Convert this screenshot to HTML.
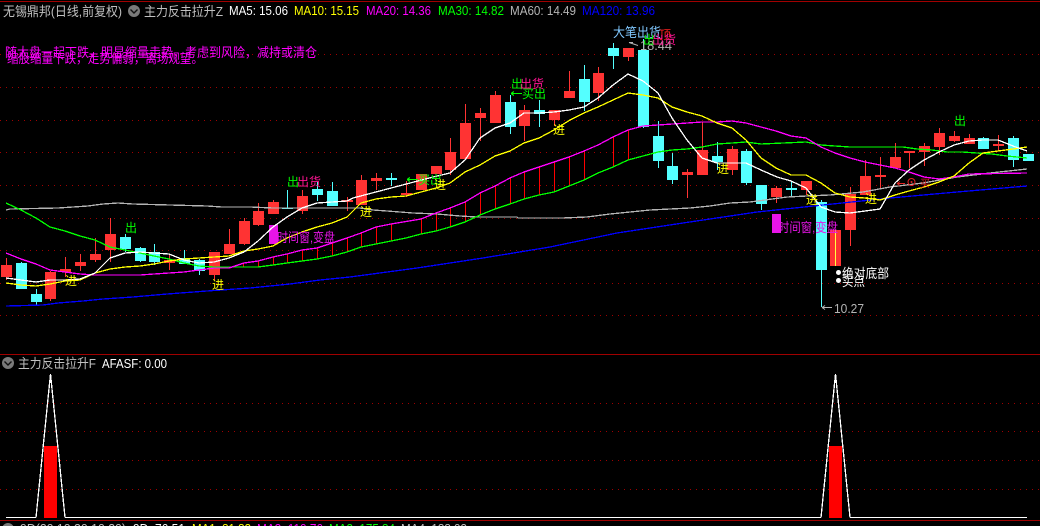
<!DOCTYPE html>
<html><head><meta charset="utf-8"><style>
html,body{margin:0;padding:0;background:#000;width:1040px;height:526px;overflow:hidden}
svg{display:block}
text{font-family:"WenQuanYi Zen Hei","Liberation Sans","Noto Sans CJK SC",sans-serif;font-size:13px}
</style></head><body>
<svg width="1040" height="526" viewBox="0 0 1040 526" xmlns="http://www.w3.org/2000/svg">
<rect width="1040" height="526" fill="#000"/>
<g shape-rendering="crispEdges">
<path d="M0 1.5H1040M0 354.5H1040M0 520.5H1040" stroke="#a00000" stroke-width="1" fill="none"/>
<path d="M0 54.5H1040M0 87.5H1040M0 120.5H1040M0 152.5H1040M0 185.5H1040M0 218.5H1040M0 250.5H1040M0 283.5H1040M0 315.5H1040M0 403.5H1040M0 431.5H1040M0 460.5H1040M0 489.5H1040" stroke="#a00000" stroke-width="1" stroke-dasharray="1 5" fill="none"/>
<path d="M243.5 263V267M258.5 261V267M273.5 257V265M287.5 254V263M302.5 250V261M317.5 248V259M332.5 243V256M347.5 238V252M361.5 233V247M376.5 227V244M391.5 224V241M421.5 219V234M436.5 213V231M450.5 208V227M465.5 202V222M480.5 193V215M495.5 186V209M510.5 178V204M524.5 172V199M539.5 167V195M554.5 162V192M569.5 157V186M584.5 151V180M613.5 137V167M628.5 130V160" stroke="#ff0000" stroke-width="1" fill="none"/>
<path fill="#ff3333" d="M1 265h11v12H1zM6 258h1v22H6zM45 272h11v27H45zM50 271h1v30h-1zM60 269h11v3H60zM65 257h1v20h-1zM75 262h11v4H75zM80 254h1v17h-1zM90 254h11v6H90zM95 238h1v24h-1zM105 234h11v16h-11zM110 218h1v44h-1zM164 260h11v3h-11zM169 255h1v15h-1zM209 252h11v23h-11zM214 252h1v28h-1zM224 244h11v10h-11zM229 229h1v25h-1zM239 221h11v23h-11zM244 218h1v27h-1zM253 211h11v14h-11zM258 203h1v23h-1zM268 202h11v12h-11zM273 200h1v14h-1zM297 196h11v15h-11zM302 190h1v24h-1zM342 200h11v2h-11zM347 197h1v14h-1zM356 180h11v25h-11zM361 175h1v30h-1zM371 178h11v3h-11zM376 173h1v17h-1zM401 193h11v2h-11zM406 181h1v16h-1zM416 174h11v16h-11zM431 166h11v8h-11zM445 152h11v18h-11zM450 138h1v37h-1zM460 123h11v36h-11zM465 104h1v55h-1zM475 113h11v5h-11zM480 108h1v33h-1zM490 95h11v28h-11zM495 91h1v32h-1zM519 110h11v16h-11zM524 105h1v36h-1zM549 110h11v10h-11zM554 110h1v16h-1zM564 91h11v7h-11zM569 71h1v27h-1zM593 73h11v20h-11zM598 67h1v34h-1zM623 48h11v9h-11zM628 48h1v13h-1zM682 172h11v3h-11zM687 169h1v29h-1zM697 150h11v25h-11zM702 122h1v28h-1zM727 149h11v21h-11zM732 146h1v29h-1zM771 188h11v9h-11zM776 186h1v17h-1zM801 181h11v9h-11zM806 181h1v14h-1zM830 230h11v36h-11zM845 194h11v36h-11zM850 187h1v59h-1zM860 176h11v19h-11zM865 160h1v35h-1zM875 175h11v2h-11zM880 157h1v31h-1zM890 157h11v11h-11zM895 143h1v25h-1zM904 151h11v2h-11zM909 151h1v17h-1zM919 146h11v6h-11zM924 143h1v23h-1zM934 133h11v14h-11zM939 128h1v27h-1zM949 136h11v5h-11zM954 131h1v11h-1zM964 138h11v6h-11zM969 134h1v10h-1zM993 144h11v2h-11zM998 135h1v16h-1z"/>
<path fill="#54ffff" d="M16 263h11v26H16zM21 262h1v27h-1zM31 294h11v8H31zM36 289h1v16h-1zM120 237h11v12h-11zM125 234h1v18h-1zM135 248h11v13h-11zM140 247h1v15h-1zM149 252h11v10h-11zM154 244h1v21h-1zM179 258h11v6h-11zM184 250h1v14h-1zM194 260h11v11h-11zM199 259h1v16h-1zM282 208h11v1h-11zM287 190h1v18h-1zM312 189h11v6h-11zM317 182h1v19h-1zM327 191h11v15h-11zM332 182h1v24h-1zM386 178h11v2h-11zM391 173h1v13h-1zM505 102h11v25h-11zM510 95h1v39h-1zM534 110h11v4h-11zM539 100h1v27h-1zM579 79h11v23h-11zM584 65h1v46h-1zM608 48h11v8h-11zM613 43h1v26h-1zM638 50h11v77h-11zM643 39h1v89h-1zM653 136h11v25h-11zM658 121h1v47h-1zM667 166h11v14h-11zM672 153h1v31h-1zM712 156h11v6h-11zM717 142h1v28h-1zM741 151h11v32h-11zM746 149h1v36h-1zM756 185h11v19h-11zM761 185h1v25h-1zM786 188h11v2h-11zM791 182h1v14h-1zM816 202h11v68h-11zM821 200h1v107h-1zM978 138h11v11h-11zM983 137h1v12h-1zM1008 138h11v22h-11zM1013 136h1v31h-1zM1023 154h11v7h-11z"/>
<rect x="835" y="230" width="1" height="36" fill="#ffff40"/>
<rect x="269" y="225" width="9" height="19" fill="#e814e8"/>
<rect x="772" y="214" width="9" height="19" fill="#e814e8"/>
</g>
<g fill="none" stroke-width="1.3" shape-rendering="crispEdges">
<polyline stroke="#0000ff" points="6,306 43,305 58,303 83,301 103,299 133,297 167,294 207,291 250,288 290,284 320,280 350,277 417,268 483,258 550,247 617,233 683,223 757,212 823,205 890,198 957,192 1027,186"/>
<polyline stroke="#b4b4b4" points="6,210 10,209 58,208 73,207 88,206 103,204 118,203 133,204 207,206 222,207 250,207 273,208 360,208 373,210 387,211 400,212 413,213 437,214 460,216 477,217 517,217 518,218 562,218 587,217 610,214 650,210 690,208 710,206 730,203 750,202 787,197 807,196 830,195 863,192 890,187 923,183 957,177 990,173 1027,169"/>
<polyline stroke="#00ff00" points="6,203 21,210 36,218 50,227 65,231 80,236 95,240 110,247 125,250 140,253 154,256 169,259 184,263 199,266 214,267 258,267 273,265 287,263 302,261 317,259 332,256 347,252 361,247 376,244 391,241 406,238 421,234 436,231 450,227 465,222 480,215 495,209 510,204 524,199 539,195 554,192 569,186 584,180 598,173 613,167 628,160 643,156 658,152 672,150 687,149 702,147 717,144 732,143 746,142 761,144 806,142 821,145 835,146 850,147 903,147 917,149 932,150 947,152 962,152 977,153 992,154 1007,156 1027,158"/>
<polyline stroke="#ff00ff" points="6,253 21,259 36,264 50,270 65,272 80,274 95,275 140,275 154,274 169,273 184,272 199,270 214,268 229,268 244,263 258,261 273,257 287,254 302,250 317,248 332,243 347,238 361,233 376,227 391,224 421,219 436,213 450,208 465,202 480,193 495,186 510,178 524,172 539,167 554,162 569,157 584,151 598,145 613,137 628,130 643,126 658,125 702,122 717,122 732,121 746,123 761,127 776,131 791,136 806,138 821,147 835,153 850,158 865,162 880,165 895,168 909,172 924,177 939,179 954,177 969,174 1027,173"/>
<polyline stroke="#ffff00" points="6,283 21,285 36,286 50,284 65,281 80,280 95,273 110,269 125,267 140,266 154,264 169,261 184,259 199,258 214,257 229,256 244,251 258,249 273,246 287,238 302,232 317,227 332,223 347,217 361,203 376,199 391,197 406,196 421,192 436,188 450,183 465,172 480,165 495,156 510,151 524,143 539,138 554,130 570,120 584,113 598,107 613,100 628,93 643,95 658,98 672,107 687,112 702,116 717,123 732,128 746,140 761,158 776,168 791,175 806,175 821,183 835,193 850,197 865,198 880,200 895,195 909,191 924,187 939,182 954,176 969,163 983,153 998,151 1013,149 1027,147"/>
<polyline stroke="#ffffff" points="6,278 21,280 36,282 50,280 65,280 80,279 95,273 110,258 125,253 140,252 154,253 169,254 184,260 199,263 214,262 229,258 244,252 258,241 273,227 287,217 302,208 317,203 332,202 347,201 353,198 433,177 450,173 465,160 480,138 495,128 510,123 524,113 539,113 554,112 569,110 584,107 598,98 613,85 628,74 643,81 658,93 672,118 687,140 702,158 717,163 746,163 761,170 777,177 791,181 806,188 821,207 835,212 850,213 865,211 880,209 895,183 909,170 924,160 939,152 954,145 969,141 983,140 998,140 1013,146 1027,151"/>
<path stroke="#ffffff" stroke-width="1" d="M6 517.5H36M65 517.5H821M850 517.5H1027"/>
<polyline stroke="#ffffff" points="36,517.5 50.5,374 65,517.5"/>
<polyline stroke="#ffffff" points="821,517.5 835.5,374 850,517.5"/>
</g>
<g shape-rendering="crispEdges"><rect x="44" y="446" width="13" height="72" fill="#ff0000"/><rect x="829" y="446" width="13" height="72" fill="#ff0000"/></g>
<!-- header -->
<text x="3" y="16" fill="#c0c0c0" textLength="119" lengthAdjust="spacingAndGlyphs">无锡鼎邦(日线,前复权)</text>
<circle cx="134" cy="11" r="6" fill="#7a7a7a"/><path d="M130.5 9.5l3.5 3.5 3.5-3.5" stroke="#111" stroke-width="1.4" fill="none"/>
<text x="144" y="16" fill="#c0c0c0" textLength="79" lengthAdjust="spacingAndGlyphs">主力反击拉升Z</text>
<text x="229" y="15" fill="#ffffff" textLength="59" lengthAdjust="spacingAndGlyphs">MA5: 15.06</text>
<text x="294" y="15" fill="#ffff00" textLength="65" lengthAdjust="spacingAndGlyphs">MA10: 15.15</text>
<text x="366" y="15" fill="#ff00ff" textLength="65" lengthAdjust="spacingAndGlyphs">MA20: 14.36</text>
<text x="438" y="15" fill="#00ff00" textLength="66" lengthAdjust="spacingAndGlyphs">MA30: 14.82</text>
<text x="510" y="15" fill="#b4b4b4" textLength="66" lengthAdjust="spacingAndGlyphs">MA60: 14.49</text>
<text x="582" y="15" fill="#0000ff" textLength="73" lengthAdjust="spacingAndGlyphs">MA120: 13.96</text>
<!-- overlays -->
<text x="5" y="57" fill="#ff00ff" textLength="312" lengthAdjust="spacingAndGlyphs">随大盘一起下跌，明显缩量走势，考虑到风险，减持或清仓</text>
<text x="7" y="63" fill="#ff00ff" textLength="196" lengthAdjust="spacingAndGlyphs">缩股缩量下跌，走势偏弱，离场观望。</text>
<g>
<text x="125" y="232" fill="#00ff00" style="font-size:12px">出</text>
<text x="287" y="186" fill="#00ff00" style="font-size:12px">出</text><text x="297" y="186" fill="#ff1493" style="font-size:12px">出货</text>
<text x="511" y="88" fill="#00ff00" style="font-size:12px">出</text><text x="520" y="88" fill="#ff1493" style="font-size:12px">出货</text>
<path d="M511 93.5h11M511 93.5l3-2M511 93.5l3 2" stroke="#00ff00" fill="none" shape-rendering="crispEdges"/>
<text x="522" y="98" fill="#00ff00" style="font-size:12px">买出</text>
<path d="M407 179.5h11M407 179.5l3-2M407 179.5l3 2" stroke="#00ff00" fill="none" shape-rendering="crispEdges"/>
<text x="418" y="184" fill="#00ff00" style="font-size:12px">买出</text>
<text x="954" y="125" fill="#00ff00" style="font-size:12px">出</text>
<text x="613" y="37" fill="#80c8ff" textLength="48" lengthAdjust="spacingAndGlyphs">大笔出货</text>
<text x="659" y="39" fill="#ff2020" style="font-size:12px">顶</text>
<path d="M629 42.5l9 3M629 42.5h4" stroke="#b4b4b4" fill="none"/><text x="640" y="50" fill="#b4b4b4" textLength="32" lengthAdjust="spacingAndGlyphs">18.44</text>
<text x="643" y="44" fill="#00ff00" style="font-size:12px">出</text><text x="652" y="44" fill="#ff1493" style="font-size:12px">出货</text>
<g fill="#ffff00">
<text x="65" y="285" style="font-size:12px">进</text><text x="212" y="289" style="font-size:12px">进</text><text x="360" y="216" style="font-size:12px">进</text><text x="434" y="189" style="font-size:12px">进</text><text x="553" y="134" style="font-size:12px">进</text><text x="717" y="173" style="font-size:12px">进</text><text x="806" y="204" style="font-size:12px">进</text><text x="865" y="203" style="font-size:12px">进</text>
</g>
<text x="277" y="242" fill="#e814e8" textLength="58" lengthAdjust="spacingAndGlyphs">时间窗,变盘</text>
<text x="778" y="232" fill="#e814e8" textLength="60" lengthAdjust="spacingAndGlyphs">时间窗,变盘</text>
<text x="842" y="278" fill="#ffffff" textLength="47" lengthAdjust="spacingAndGlyphs">绝对底部</text>
<text x="842" y="286" fill="#ffffff" textLength="23" lengthAdjust="spacingAndGlyphs">买点</text>
<circle cx="838.5" cy="272.5" r="2.5" fill="#fff"/><circle cx="838.5" cy="280.5" r="2.5" fill="#fff"/>
<path d="M822 307.5h10M822 307.5l3-2M822 307.5l3 2" stroke="#b4b4b4" fill="none"/>
<text x="834" y="313" fill="#b4b4b4" textLength="30" lengthAdjust="spacingAndGlyphs">10.27</text>
<path d="M897 183.5h8M897 183.5l3-2M897 183.5l3 2" stroke="#e02020" fill="none"/><circle cx="911.5" cy="182" r="3.5" fill="none" stroke="#e02020"/><circle cx="911.5" cy="182" r="1" fill="#e02020"/><text x="920" y="187" fill="#e02020" style="font-size:10px">买</text>
</g>
<!-- lower panel -->
<circle cx="8" cy="363" r="6" fill="#7a7a7a"/><path d="M4.5 361.5l3.5 3.5 3.5-3.5" stroke="#111" stroke-width="1.4" fill="none"/>
<text x="18" y="368" fill="#c0c0c0" textLength="78" lengthAdjust="spacingAndGlyphs">主力反击拉升F</text>
<text x="102" y="368" fill="#ffffff" textLength="65" lengthAdjust="spacingAndGlyphs">AFASF: 0.00</text>
<!-- bottom strip clipped -->
<svg x="0" y="521" width="1040" height="5" viewBox="0 521 1040 5">
<circle cx="8" cy="529" r="6" fill="#7a7a7a"/>
<text x="20" y="533" fill="#c0c0c0" textLength="106" lengthAdjust="spacingAndGlyphs">9D(20.10.20.10.20)</text>
<text x="133" y="533" fill="#fff" textLength="52" lengthAdjust="spacingAndGlyphs">9D: 76.51</text>
<text x="192" y="533" fill="#ffff00" textLength="59" lengthAdjust="spacingAndGlyphs">MA1: 81.83</text>
<text x="257" y="533" fill="#ff00ff" textLength="66" lengthAdjust="spacingAndGlyphs">MA2: 110.76</text>
<text x="329" y="533" fill="#00ff00" textLength="66" lengthAdjust="spacingAndGlyphs">MA3: 175.84</text>
<text x="401" y="533" fill="#c0c0c0" textLength="66" lengthAdjust="spacingAndGlyphs">MA4: 188.03</text>
</svg>
</svg>
</body></html>
